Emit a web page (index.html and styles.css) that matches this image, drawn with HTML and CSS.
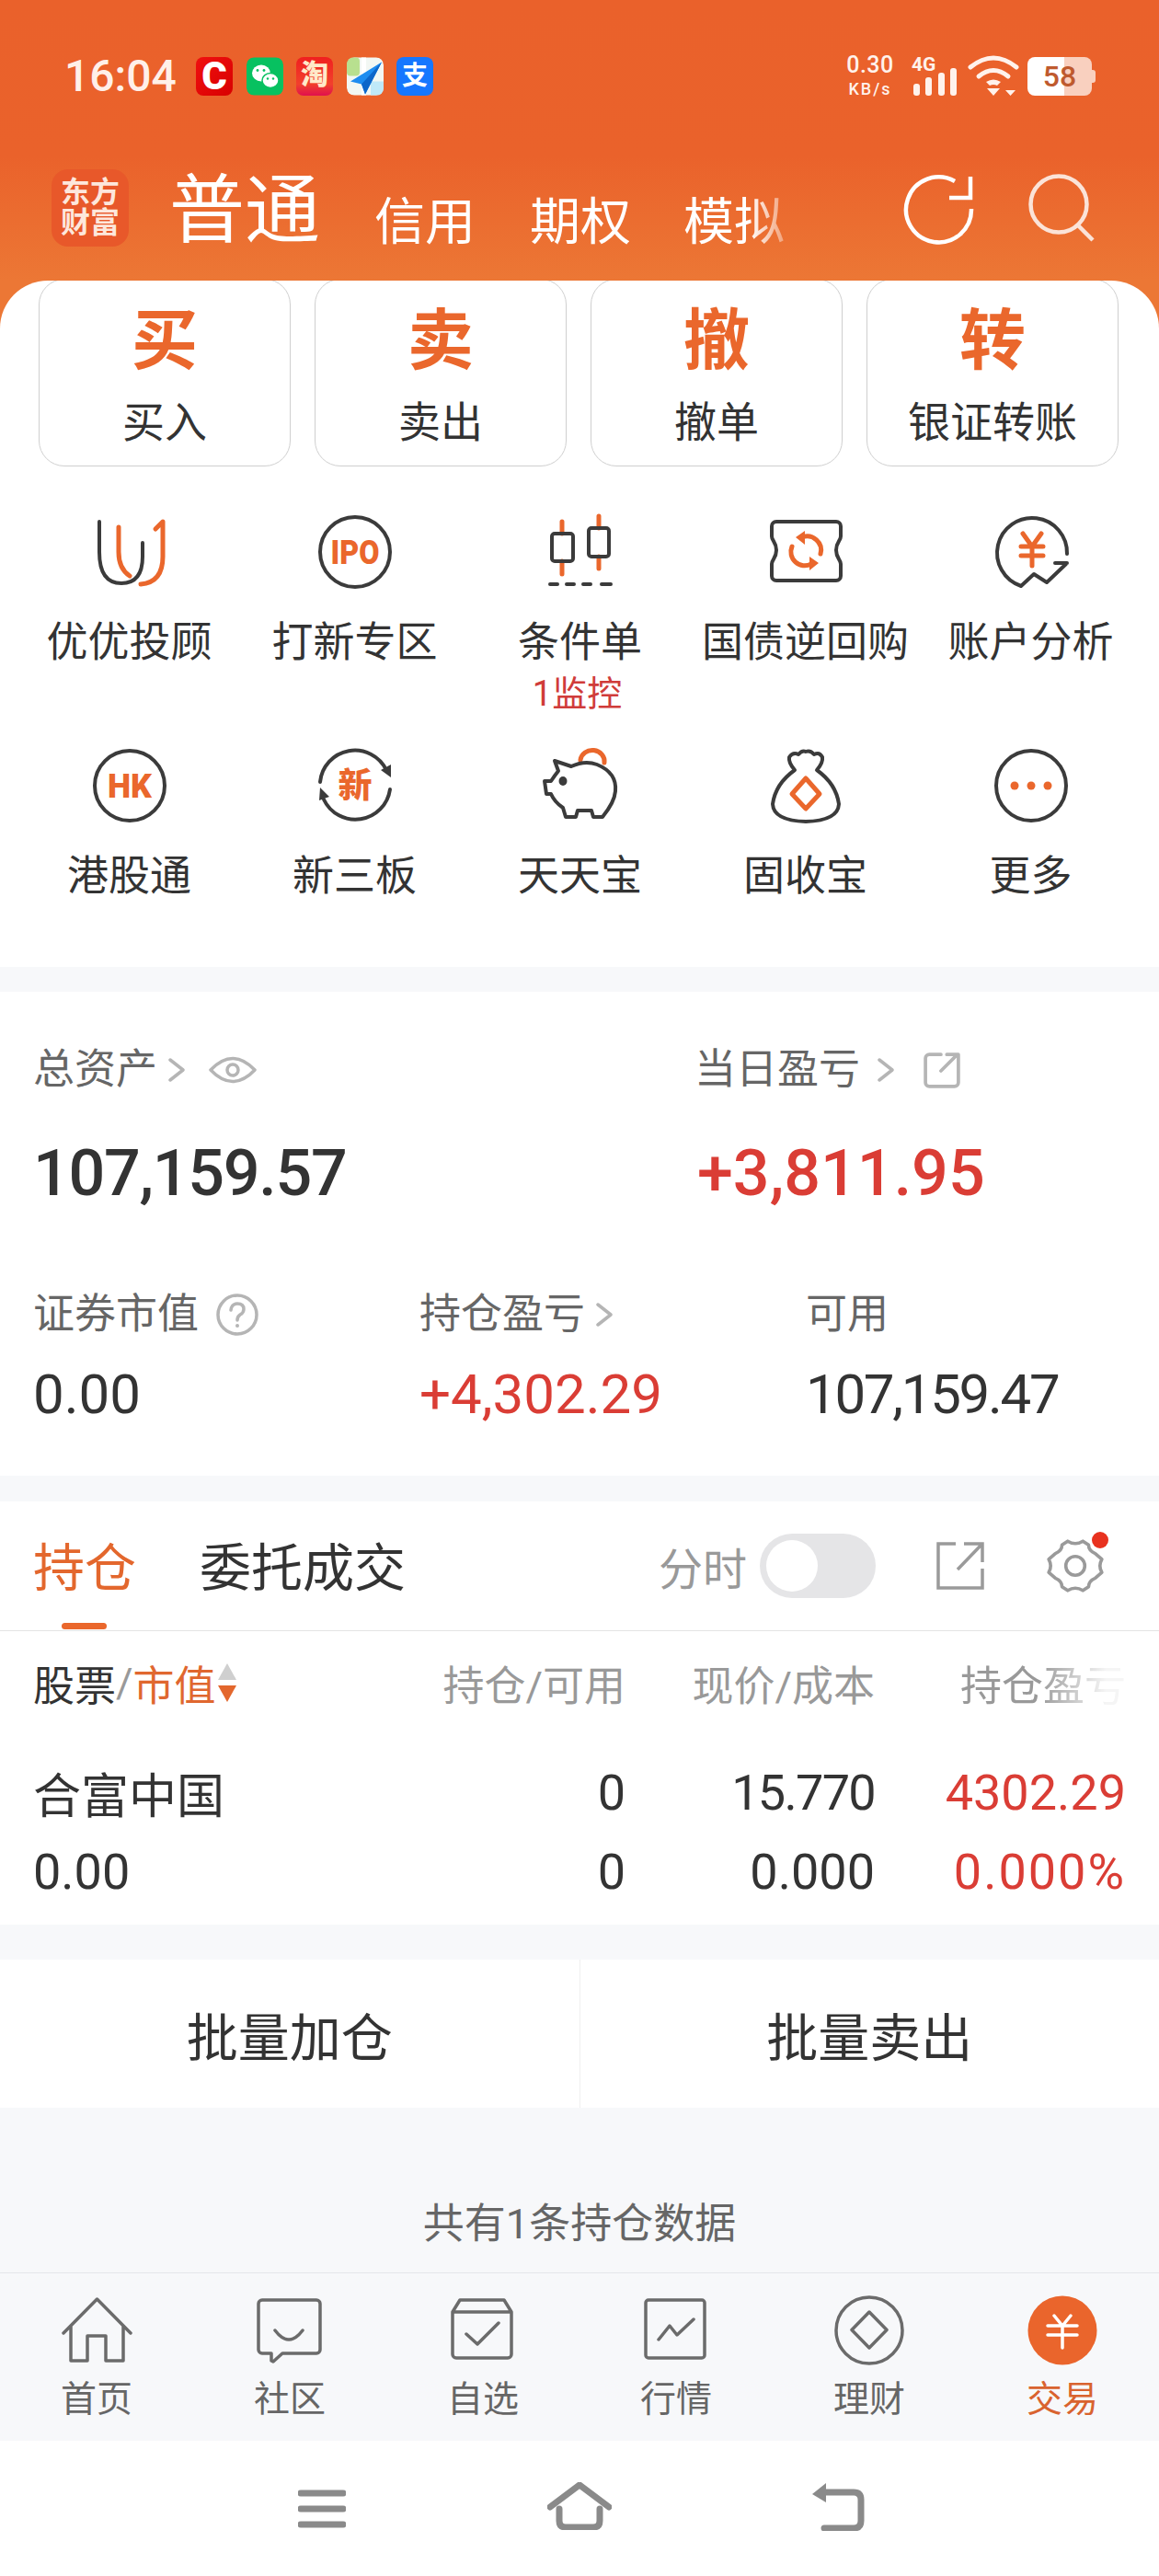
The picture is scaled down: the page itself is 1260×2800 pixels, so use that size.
FILE: index.html
```html
<!DOCTYPE html>
<html lang="zh-CN">
<head>
    <meta charset="UTF-8">
    <meta name="viewport" content="width=device-width, initial-scale=1.0">
    <title>交易</title>
    <link rel="stylesheet" href="styles.css">
</head>
<body>
<div class="page">
    <!-- 顶部 -->
    <header class="header">
        <div class="status-bar">
            <span class="time">16:04</span>
            <div class="app-icons">
                <span class="app app-c">C</span>
                <svg class="app" viewBox="0 0 40 41"><rect width="40" height="41" rx="8" fill="#07c160"/><ellipse cx="16" cy="17" rx="10" ry="9" fill="#fff"/><ellipse cx="26" cy="25" rx="9" ry="8" fill="#fff" stroke="#07c160" stroke-width="1.5"/><circle cx="12" cy="14" r="1.4" fill="#07c160"/><circle cx="19" cy="14" r="1.4" fill="#07c160"/><circle cx="23" cy="23" r="1.2" fill="#07c160"/><circle cx="29" cy="23" r="1.2" fill="#07c160"/></svg>
                <span class="app app-tb">淘</span>
                <svg class="app" viewBox="0 0 40 41"><rect width="40" height="41" rx="8" fill="#f2f7f3"/><rect width="14" height="20" rx="4" fill="#b8e08f"/><rect x="16" width="5" height="41" fill="#fff"/><rect x="26" y="26" width="14" height="15" fill="#bfe9f8"/><path d="M38 5 4 26l12 3 4 11z" fill="#1d8cf0"/><path d="M38 5 16 29l4 11z" fill="#0d66c9"/></svg>
                <span class="app app-ali">支</span>
            </div>
            <div class="status-right">
                <div class="net-speed"><b>0.30</b><span>KB/s</span></div>
                <div class="signal">
                    <span class="signal-label">4G</span>
                    <svg class="signal-bars" viewBox="0 0 50 30"><rect x="2" y="17" width="7" height="13" rx="3" fill="#fff2ec"/><rect x="15" y="10" width="7" height="20" rx="3" fill="#fff2ec"/><rect x="29" y="5" width="7" height="25" rx="3" fill="#fff2ec"/><rect x="42" y="0" width="7" height="30" rx="3" fill="#fff2ec"/></svg>
                </div>
                <svg class="wifi" viewBox="0 0 58 46"><g fill="none" stroke="#fff2ec" stroke-width="5" stroke-linecap="round"><path d="M4 13Q29-7 54 13"/><path d="M13 23Q29 10 45 23"/></g><path d="M21 29Q29 24 37 29L33 33Q29 31 25 33z" fill="#fff2ec"/><path d="M22 36H36L29 44zM42 38H53L47.500 44z" fill="#fff2ec"/></svg>
                <div class="battery">58</div>
            </div>
        </div>
        <nav class="account-nav">
            <div class="logo">东方<br>财富</div>
            <span class="nav-main">普通</span>
            <span class="nav-item">信用</span>
            <span class="nav-item">期权</span>
            <span class="nav-item nav-fade">模拟</span>
            <div class="nav-actions">
                <svg class="nav-icon" viewBox="0 0 80 80"><g fill="none" stroke="#fff" stroke-width="4.500"><path d="M78 43A35.500 35.500 0 1 1 60 13"/><path d="M77 8V31H54"/></g></svg>
                <svg class="nav-icon nav-search" viewBox="0 0 80 80"><g fill="none" stroke="#fbe3d8" stroke-width="4.500"><circle cx="39" cy="38" r="30.500"/><path d="M60 61 76 77"/></g></svg>
            </div>
        </nav>
    </header>

    <div class="panel-wrap">
        <section class="panel">
            <div class="trade-cards">
                <div class="trade-card"><strong>买</strong><span>买入</span></div>
                <div class="trade-card"><strong>卖</strong><span>卖出</span></div>
                <div class="trade-card"><strong>撤</strong><span>撤单</span></div>
                <div class="trade-card"><strong>转</strong><span>银证转账</span></div>
            </div>
            <div class="menu-grid">
                <div class="menu-item">
                    <svg class="menu-icon" viewBox="0 0 80 80"><path class="dark" d="M7 7V40Q7 74 31 74 54 74 54 45V30"/><path class="orange" d="M28 13V40Q28 58 40 66M52 75Q76 73 76 45V7L68 15"/></svg>
                    <span>优优投顾</span>
                </div>
                <div class="menu-item">
                    <svg class="menu-icon" viewBox="0 0 80 80"><circle class="dark" cx="40" cy="40" r="38"/><text class="icon-text" x="40" y="53" font-size="37" textLength="53" lengthAdjust="spacingAndGlyphs">IPO</text></svg>
                    <span>打新专区</span>
                </div>
                <div class="menu-item">
                    <svg class="menu-icon" viewBox="0 0 80 80"><path class="orange" d="M20 7V20M20 50V64M60 1V14M60 45V58"/><rect class="dark" x="9" y="20" width="23" height="30" rx="3"/><rect class="dark" x="49" y="14" width="22" height="31" rx="3"/><path class="dark" d="M7 75H15M25 75H33M43 75H51M63 75H73"/></svg>
                    <span>条件单</span>
                    <em>1监控</em>
                </div>
                <div class="menu-item">
                    <svg class="menu-icon" viewBox="0 0 80 80"><path class="dark" d="M8 7H73a5 5 0 0 1 5 5V23c0 5-5 6-5 15s5 10 5 15V66a5 5 0 0 1-5 5H8a5 5 0 0 1-5-5V53c0-5 5-6 5-15S3 28 3 23V12a5 5 0 0 1 5-5z"/><path class="orange" d="M36 24A15 15 0 0 1 56 42M25 34A15 15 0 0 0 46 53"/><path class="orange-fill" d="M29 24 39 17V32zM54 52 44 45V60z"/></svg>
                    <span>国债逆回购</span>
                </div>
                <div class="menu-item">
                    <svg class="menu-icon" viewBox="0 0 80 80"><path class="dark" d="M79 42A38 38 0 1 0 29 77L43 64 57 73 78 53M66 52H79"/><path class="orange" d="M31 20 41 34 51 20M29 34H53M29 44H53M41 34V55"/></svg>
                    <span>账户分析</span>
                </div>
                <div class="menu-item">
                    <svg class="menu-icon" viewBox="0 0 80 80"><circle class="dark" cx="40" cy="40" r="38"/><text class="icon-text" x="40" y="53" font-size="37" textLength="48" lengthAdjust="spacingAndGlyphs">HK</text></svg>
                    <span>港股通</span>
                </div>
                <div class="menu-item">
                    <svg class="menu-icon" viewBox="0 0 80 80"><path class="dark" d="M2 36A38 38 0 0 1 74 23M78 44A38 38 0 0 1 6 55"/><path class="dark-fill" d="M68 23 79 17V31zM1 56 2 42 12 52z"/><text class="icon-text" x="40" y="53" font-size="37">新</text></svg>
                    <span>新三板</span>
                </div>
                <div class="menu-item">
                    <svg class="menu-icon" viewBox="0 0 80 80"><path class="orange" d="M40 12A13 12 0 0 1 66 15"/><path class="dark" d="M12 13 30 19Q45 12 58 17 80 26 78 46 77 58 64 74H54L52 67H37L35 74H24L21 64Q12 58 8 49H3L1 35H8Q12 29 16 24z"/><ellipse class="dark-fill" cx="21" cy="35" rx="4.500" ry="5"/></svg>
                    <span>天天宝</span>
                </div>
                <div class="menu-item">
                    <svg class="menu-icon" viewBox="0 0 80 80"><path class="dark" d="M28 23Q21 15 22 9 26 3 32 6 36 1 40 3 45 1 49 6 55 3 58 9 59 15 52 23 73 38 76 60 75 78 40 79 5 78 4 60 7 38 28 23z"/><path class="orange" d="M40 32 55 49 40 65 25 49z"/></svg>
                    <span>固收宝</span>
                </div>
                <div class="menu-item">
                    <svg class="menu-icon" viewBox="0 0 80 80"><circle class="dark" cx="40" cy="40" r="38"/><circle class="orange-fill" cx="22" cy="40" r="4.500"/><circle class="orange-fill" cx="40" cy="40" r="4.500"/><circle class="orange-fill" cx="58" cy="40" r="4.500"/></svg>
                    <span>更多</span>
                </div>
            </div>
        </section>
    </div>

    <!-- 资产 -->
    <section class="assets">
        <div class="asset-top">
            <div>
                <div class="asset-label">总资产
                    <svg class="chevron" viewBox="0 0 18 26"><path d="M2 2 16 13 2 24"/></svg>
                    <svg class="eye" viewBox="0 0 52 30"><path d="M2 15Q26-10 50 15 26 40 2 15z"/><circle cx="26" cy="15" r="6"/></svg>
                </div>
                <div class="asset-big tight">107,159.57</div>
            </div>
            <div>
                <div class="asset-label label-today">当日盈亏
                    <svg class="chevron" viewBox="0 0 18 26"><path d="M2 2 16 13 2 24"/></svg>
                    <svg class="share-small" viewBox="0 0 38 38"><path d="M18 3H6a4 4 0 0 0-4 4V32a4 4 0 0 0 4 4H32a4 4 0 0 0 4-4V14M18 20 35 3M24 3H36V15"/></svg>
                </div>
                <div class="asset-big red">+3,811.95</div>
            </div>
        </div>
        <div class="asset-bottom">
            <div>
                <div class="asset-label">证券市值
                    <svg class="help" viewBox="0 0 46 46"><circle cx="23" cy="23" r="21"/><path d="M16 18Q17 11 23 11 30 11 30 17 30 21 26 23 23 25 23 29"/><circle class="help-dot" cx="23" cy="35" r="2"/></svg>
                </div>
                <div class="asset-value">0.00</div>
            </div>
            <div>
                <div class="asset-label">持仓盈亏
                    <svg class="chevron" viewBox="0 0 18 26"><path d="M2 2 16 13 2 24"/></svg>
                </div>
                <div class="asset-value red">+4,302.29</div>
            </div>
            <div>
                <div class="asset-label">可用</div>
                <div class="asset-value tighter">107,159.47</div>
            </div>
        </div>
    </section>

    <!-- 持仓 -->
    <section class="positions">
        <div class="tabs">
            <span class="tab tab-active">持仓</span>
            <span class="tab">委托成交</span>
            <div class="tab-tools">
                <span class="switch-label">分时</span>
                <span class="switch"><i></i></span>
                <svg class="tool-share" viewBox="0 0 54 54"><path d="M22 3H3V51H51V30M24 31 50 4M31 3H51V23"/></svg>
                <span class="tool-gear">
                    <svg viewBox="0 0 64 62"><path d="M24 5Q32 10 40 5L46 9Q46 15 53 18L60 24Q56 31 60 38L53 44Q46 47 46 53L40 57Q32 52 24 57L18 53Q18 47 11 44L4 38Q8 31 4 24L11 18Q18 15 18 9z"/><ellipse cx="32" cy="31" rx="10" ry="10"/></svg>
                    <i></i>
                </span>
            </div>
        </div>
        <div class="table-row table-head">
            <div class="stock-head"><b>股票</b>/<u>市值</u>
                <svg class="sort" viewBox="0 0 20 42"><path d="M10 0 20 18H0z" fill="#cfcfcf"/><path d="M0 24H20L10 42z" fill="#e3672d"/></svg>
            </div>
            <div>持仓/可用</div>
            <div>现价/成本</div>
            <div class="head-fade">持仓盈亏</div>
        </div>
        <div class="table-row table-body">
            <div class="stock-name">合富中国</div>
            <div>0</div>
            <div class="tight-num">15.770</div>
            <div class="red">4302.29</div>
        </div>
        <div class="table-row table-body">
            <div>0.00</div>
            <div>0</div>
            <div>0.000</div>
            <div class="red wide-num">0.000%</div>
        </div>
    </section>

    <div class="batch">
        <button class="batch-btn">批量加仓</button>
        <button class="batch-btn">批量卖出</button>
    </div>

    <div class="summary">共有1条持仓数据</div>

    <!-- 底部导航 -->
    <nav class="tabbar">
        <div class="tabbar-item">
            <svg viewBox="0 0 76 76"><path d="M2 41 38.500 4 75 41M10 33V71H28V44H48V71H67V33"/></svg>
            <span>首页</span>
        </div>
        <div class="tabbar-item">
            <svg viewBox="0 0 76 76"><path d="M8 5H67a4 4 0 0 1 4 4V59a4 4 0 0 1-4 4H30L20 72 18 71V63H8a4 4 0 0 1-4-4V9a4 4 0 0 1 4-4zM22 38Q37 58 52 38"/></svg>
            <span>社区</span>
        </div>
        <div class="tabbar-item">
            <svg viewBox="0 0 76 76"><path d="M5 18 13 5H61L69 18V64a4 4 0 0 1-4 4H9a4 4 0 0 1-4-4zM5 18H69M20 42 32 53 55 30"/></svg>
            <span>自选</span>
        </div>
        <div class="tabbar-item">
            <svg viewBox="0 0 76 76"><rect x="5" y="5" width="64" height="63" rx="3"/><path d="M19 48 31 33 39 43 57 26"/></svg>
            <span>行情</span>
        </div>
        <div class="tabbar-item">
            <svg viewBox="0 0 76 76"><circle cx="38" cy="38" r="36"/><path d="M38 18 57 37.500 38 57 19 37.500z"/></svg>
            <span>理财</span>
        </div>
        <div class="tabbar-item tabbar-active">
            <svg viewBox="0 0 76 76"><circle cx="38" cy="38" r="37.500"/><path d="M29 22 38 33 47 22M22 33H54M22 43H54M38 33V57"/></svg>
            <span>交易</span>
        </div>
    </nav>

    <div class="system-nav">
        <svg class="sys-menu" viewBox="0 0 52 42"><path d="M3 4H49M3 21H49M3 38H49"/></svg>
        <svg class="sys-home" viewBox="0 0 70 52"><path d="M3 27 35 3 67 27M13 29V42Q13 49 20 49H50Q57 49 57 42V29"/></svg>
        <svg class="sys-back" viewBox="0 0 58 52"><path d="M14 10H46Q54 10 54 18V41Q54 49 46 49H14"/><path class="sys-arrow" d="M16 0V21L1 12z"/></svg>
    </div>
</div>
</body>
</html>
```

FILE: styles.css
```css
* {
    box-sizing: border-box;
}
body {
    margin: 0;
    font-family: Roboto, "Noto Sans CJK SC", sans-serif;
    color: #333;
    background: #fff;
}
.page {
    width: 1260px;
    height: 2800px;
    overflow: hidden;
    display: flex;
    flex-direction: column;
    background: #f7f8fa;
}
.red {
    color: #da3d35;
}

/* 顶部 */
.header {
    height: 305px;
    padding-top: 62px;
    background: linear-gradient(#ea612b 0, #ea622b 170px, #ec7735 305px);
    color: #fff;
}
.status-bar {
    height: 42px;
    display: flex;
    align-items: center;
    padding-left: 70px;
}
.time {
    width: 143px;
    font-size: 48px;
    font-weight: 500;
    line-height: 42px;
    color: #fff0e9;
}
.app-icons {
    display: flex;
    gap: 14.500px;
}
.app {
    display: block;
    width: 40px;
    height: 42px;
    border-radius: 8px;
    text-align: center;
}
.app-c {
    background: linear-gradient(135deg, #f01010, #d80000);
    font-size: 42px;
    font-weight: 900;
    line-height: 42px;
}
.app-tb {
    background: linear-gradient(#f01f1f, #f2402c 70%, #e0104e);
    font-size: 30px;
    font-weight: 900;
    line-height: 38px;
    color: #ffe9c9;
}
.app-ali {
    background: #1677ff;
    font-size: 28px;
    font-weight: 700;
    line-height: 42px;
}
.status-right {
    margin-left: auto;
    display: flex;
    align-items: center;
    padding-right: 73px;
}
.net-speed {
    width: 58px;
    margin-top: 2px;
    text-align: center;
    color: #fff2ec;
}
.net-speed b {
    display: block;
    font-size: 25px;
    font-weight: 500;
    line-height: 26px;
    letter-spacing: .5px;
}
.net-speed span {
    display: block;
    font-size: 18px;
    font-weight: 500;
    line-height: 26px;
    letter-spacing: 2px;
}
.signal {
    position: relative;
    width: 50px;
    height: 42px;
    margin-left: 16px;
}
.signal-label {
    position: absolute;
    left: 0;
    top: -2px;
    font-size: 21px;
    font-weight: 700;
    line-height: 20px;
    color: #fff2ec;
}
.signal-bars {
    position: absolute;
    left: 0;
    bottom: 0;
    width: 50px;
    height: 30px;
}
.wifi {
    width: 58px;
    height: 46px;
    margin-left: 10px;
}
.battery {
    position: relative;
    width: 70px;
    height: 42px;
    margin-left: 8px;
    border-radius: 8px;
    background: linear-gradient(to right, #fff 57%, #f9d0bf 57%);
    color: #bf5a2e;
    font-size: 32px;
    font-weight: 500;
    line-height: 42px;
    text-align: center;
}
.battery::after {
    content: "";
    position: absolute;
    right: -4px;
    top: 14px;
    width: 4px;
    height: 14px;
    border-radius: 0 3px 3px 0;
    background: #f9d0bf;
}
.account-nav {
    height: 84px;
    margin-top: 80px;
    padding-left: 56px;
    display: flex;
    align-items: flex-end;
}
.logo {
    width: 84px;
    height: 84px;
    padding-top: 9px;
    border-radius: 18px;
    background: #e8582a;
    color: #fde7dc;
    font-size: 32px;
    font-weight: 700;
    line-height: 33px;
    text-align: center;
}
.nav-main {
    margin-left: 44px;
    font-size: 82px;
    line-height: 78px;
}
.nav-item {
    margin-left: 59px;
    font-size: 55px;
    line-height: 54px;
}
.nav-fade {
    margin-left: 57px;
    mask-image: linear-gradient(to right, #000 65%, rgba(0, 0, 0, .35) 100%);
}
.nav-actions {
    margin-left: auto;
    align-self: flex-start;
    display: flex;
    padding-right: 68px;
    gap: 54px;
}
.nav-icon {
    width: 80px;
    height: 80px;
    overflow: visible;
}

/* 买卖和功能区 */
.panel-wrap {
    background: #ec7735;
}
.panel {
    height: 746px;
    overflow: hidden;
    border-radius: 52px 52px 0 0;
    background: #fff;
}
.trade-cards {
    display: flex;
    gap: 26px;
    margin-top: -2px;
    padding-left: 42px;
}
.trade-card {
    width: 274px;
    height: 204px;
    border: 1px solid #cfcfcf;
    border-radius: 28px;
    text-align: center;
}
.trade-card strong {
    display: block;
    margin-top: 23px;
    color: #ea672c;
    font-size: 72px;
    font-weight: 700;
    line-height: 88px;
}
.trade-card span {
    display: block;
    margin-top: 16px;
    font-size: 46px;
    line-height: 56px;
}
.menu-grid {
    display: grid;
    grid-template-columns: repeat(5, 245px);
    grid-template-rows: 214px auto;
    row-gap: 40px;
    margin-top: 53px;
    padding-left: 18px;
}
.menu-item {
    display: flex;
    flex-direction: column;
    align-items: center;
    font-size: 45px;
    line-height: 52px;
    white-space: nowrap;
}
.menu-icon {
    width: 80px;
    height: 80px;
    margin-bottom: 33px;
    overflow: visible;
}
.menu-item em {
    margin-top: 9px;
    padding-right: 6px;
    color: #d03c3a;
    font-size: 38px;
    font-style: normal;
    line-height: 40px;
}
.dark, .orange {
    fill: none;
    stroke-width: 4;
    stroke-linecap: round;
    stroke-linejoin: round;
}
.dark {
    stroke: #3b3b3b;
}
.orange {
    stroke: #ea672c;
    stroke-width: 5;
}
.dark-fill {
    fill: #3b3b3b;
}
.orange-fill {
    fill: #ea672c;
}
.icon-text {
    fill: #ea672c;
    font-family: Roboto, "Noto Sans CJK SC", sans-serif;
    font-weight: 900;
    text-anchor: middle;
}

/* 资产 */
.assets {
    height: 526px;
    margin-top: 27px;
    padding: 59px 0 0 36px;
    background: #fff;
}
.asset-top {
    display: grid;
    grid-template-columns: 722px 1fr;
}
.asset-bottom {
    display: grid;
    grid-template-columns: 420px 420px 1fr;
    margin-top: 86px;
}
.asset-label {
    display: flex;
    align-items: center;
    color: #666;
    font-size: 45px;
    line-height: 52px;
    white-space: nowrap;
}
.label-today {
    margin-left: -3px;
}
.label-today .chevron {
    margin-left: 19px;
}
.asset-big {
    margin-top: 44px;
    font-size: 70px;
    font-weight: 500;
    line-height: 84px;
}
.asset-big.tight {
    letter-spacing: -1.300px;
}
.asset-value {
    margin-top: 25px;
    font-size: 60px;
    line-height: 72px;
}
.asset-value.tighter {
    letter-spacing: -2.300px;
}
.chevron, .eye, .share-small, .help {
    fill: none;
    stroke: #b5b5b5;
    stroke-width: 3.500;
    stroke-linecap: round;
    stroke-linejoin: round;
}
.chevron {
    width: 18px;
    height: 26px;
    margin-left: 12px;
}
.eye {
    width: 52px;
    height: 30px;
    margin-left: 26px;
}
.share-small {
    width: 40px;
    height: 40px;
    margin-left: 32px;
}
.help {
    width: 46px;
    height: 46px;
    margin-left: 19px;
}
.help-dot {
    fill: #b5b5b5;
    stroke: none;
}

/* 持仓 */
.positions {
    height: 460px;
    margin-top: 28px;
    background: #fff;
}
.tabs {
    position: relative;
    height: 141px;
    padding: 6px 58px 0 36px;
    display: flex;
    align-items: center;
    border-bottom: 1px solid #e4e4e4;
}
.tab {
    margin-right: 69px;
    font-size: 56px;
    line-height: 70px;
}
.tab-active {
    color: #e3672d;
}
.tab-active::after {
    content: "";
    position: absolute;
    left: 67px;
    bottom: 1px;
    width: 49px;
    height: 7px;
    border-radius: 4px;
    background: #ea672c;
}
.tab-tools {
    margin-left: auto;
    display: flex;
    align-items: center;
    margin-top: -6px;
}
.switch-label {
    margin-right: 14px;
    color: #999;
    font-size: 48px;
}
.switch {
    width: 126px;
    height: 70px;
    padding: 7px;
    border-radius: 35px;
    background: #e5e5e7;
}
.switch i {
    display: block;
    width: 56px;
    height: 56px;
    border-radius: 50%;
    background: #fff;
}
.tool-share {
    width: 54px;
    height: 54px;
    margin-left: 65px;
    fill: none;
    stroke: #9a9a9a;
    stroke-width: 3.500;
}
.tool-gear {
    position: relative;
    width: 66px;
    height: 64px;
    margin-left: 65px;
}
.tool-gear svg {
    width: 66px;
    height: 64px;
    fill: none;
    stroke: #9a9a9a;
    stroke-width: 3.500;
    stroke-linejoin: round;
}
.tool-gear i {
    position: absolute;
    right: -3px;
    top: -5px;
    width: 18px;
    height: 18px;
    border-radius: 50%;
    background: #e8321f;
}
.table-row {
    display: grid;
    grid-template-columns: 300px 344px 271px 273px;
    padding-left: 36px;
    text-align: right;
}
.table-row > div:first-child {
    text-align: left;
}
.table-head {
    height: 112px;
    margin-bottom: 20px;
    align-items: center;
    color: #999;
    font-size: 45px;
}
.stock-head {
    display: flex;
    align-items: center;
}
.stock-head b {
    color: #333;
    font-weight: 400;
}
.stock-head u {
    color: #e0672f;
    text-decoration: none;
}
.sort {
    width: 20px;
    height: 42px;
    margin-left: 2px;
}
.head-fade {
    mask-image: linear-gradient(to right, #000 65%, rgba(0, 0, 0, .1) 92%);
}
.table-body {
    height: 86px;
    align-items: center;
    font-size: 54px;
}
.table-body .stock-name {
    font-size: 52px;
}
.tight-num {
    letter-spacing: -1.700px;
}
.wide-num {
    letter-spacing: 2px;
}

.batch {
    height: 161px;
    margin-top: 38px;
    display: flex;
    background: #fff;
}
.batch-btn {
    flex: 1;
    border: none;
    background: none;
    color: #333;
    font-family: inherit;
    font-size: 56px;
}
.batch-btn:first-child {
    border-right: 1px solid #efefef;
}
.summary {
    height: 179px;
    padding-top: 100px;
    color: #666;
    font-size: 45px;
    line-height: 54px;
    text-align: center;
}

/* 底部导航 */
.tabbar {
    height: 183px;
    padding-top: 24px;
    display: flex;
    border-top: 1px solid #e4e6ea;
    background: #f7f8fa;
}
.tabbar-item {
    width: 210px;
    display: flex;
    flex-direction: column;
    align-items: center;
    color: #666;
    font-size: 39px;
    line-height: 44px;
}
.tabbar-item svg {
    width: 76px;
    height: 76px;
    margin-bottom: 15px;
    fill: none;
    stroke: #6b6b6b;
    stroke-width: 3.500;
    stroke-linejoin: round;
    stroke-linecap: round;
    overflow: visible;
}
.tabbar-active {
    color: #d9632f;
}
.tabbar-active circle {
    fill: #ea652c;
    stroke: none;
}
.tabbar-active path {
    stroke: #fff;
}
.system-nav {
    flex: 1;
    position: relative;
    background: #fff;
}
.system-nav svg {
    position: absolute;
    fill: none;
    stroke: #8a8a8a;
    stroke-width: 7;
    stroke-linecap: round;
    stroke-linejoin: round;
}
.sys-menu {
    left: 324px;
    top: 53px;
    width: 52px;
    height: 42px;
}
.sys-home {
    left: 595px;
    top: 45px;
    width: 70px;
    height: 52px;
}
.sys-back {
    left: 882px;
    top: 46px;
    width: 58px;
    height: 52px;
}
.system-nav .sys-arrow {
    fill: #8a8a8a;
    stroke: none;
}
```
